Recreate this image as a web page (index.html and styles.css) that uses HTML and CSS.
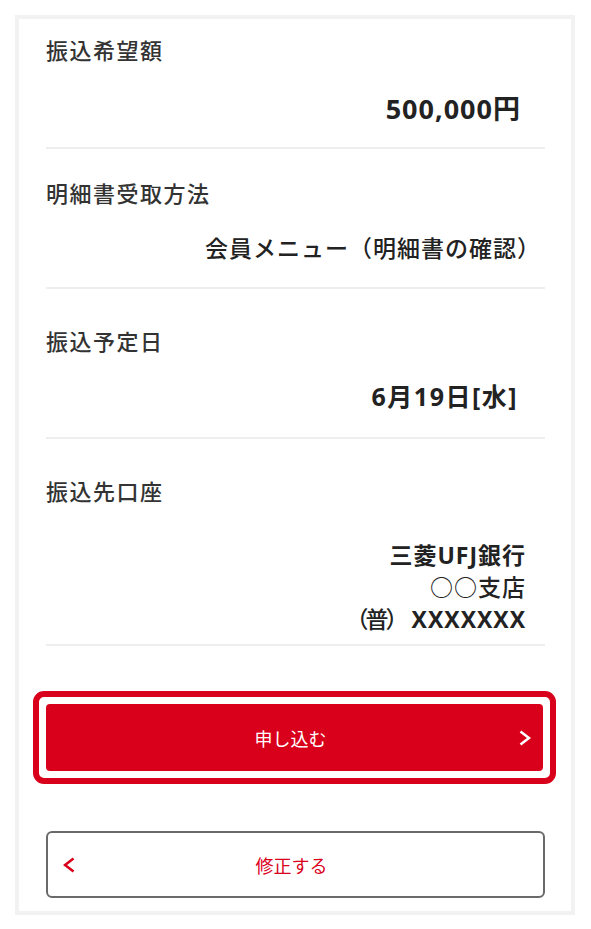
FILE: index.html
```html
<!DOCTYPE html>
<html lang="ja">
<head>
    <meta charset="UTF-8">
    <meta name="viewport" content="width=device-width, initial-scale=1.0">
    <title>振込内容の確認</title>
    <link rel="stylesheet" href="styles.css">
</head>
<body>
    <div class="card">
        <div class="row row--amount">
            <div class="label">振込希望額</div>
            <div class="value value--amount">500,000円</div>
        </div>
        <div class="row row--method">
            <div class="label">明細書受取方法</div>
            <div class="value value--method">会員メニュー（明細書の確認）</div>
        </div>
        <div class="row row--date">
            <div class="label">振込予定日</div>
            <div class="value value--date">6月19日[水]</div>
        </div>
        <div class="row row--account">
            <div class="label">振込先口座</div>
            <div class="value value--account">
                <div class="bold">三菱UFJ銀行</div>
                <div>○○支店</div>
                <div><span class="paren">（普）</span><span class="bold">XXXXXXX</span></div>
            </div>
        </div>

        <div class="actions">
            <div class="focus-ring">
                <button type="button" class="btn btn--primary">
                    <span></span>
                    <span class="btn-text">申し込む</span>
                    <svg class="chevron chevron--right" width="12" height="16" viewBox="0 0 12 16">
                        <polyline points="1.5,1.5 10,8 1.5,14.5" fill="none" stroke="currentColor" stroke-width="2.6"/>
                    </svg>
                </button>
            </div>
            <button type="button" class="btn btn--secondary">
                <svg class="chevron chevron--left" width="12" height="16" viewBox="0 0 12 16">
                    <polyline points="10.5,1.5 2,8 10.5,14.5" fill="none" stroke="currentColor" stroke-width="2.6"/>
                </svg>
                <span class="btn-text">修正する</span>
                <span></span>
            </button>
        </div>
    </div>
</body>
</html>
```

FILE: styles.css
```css
* {
    box-sizing: border-box;
}
body {
    margin: 0;
    padding: 15px 16px 14px 15px;
    background-color: #fff;
    color: #333;
    font-family: "Open Sans", "Noto Sans CJK JP", sans-serif;
}
.card {
    border: 4px solid #f2f2f2;
    padding: 0 26px 13px 27px;
}
.row {
    border-bottom: 2px solid #eee;
    padding: 36px 0 23px;
}
.row--amount {
    padding: 15px 0 18px;
}
.row--method {
    padding-top: 28px;
}
.row--account {
    padding-bottom: 9px;
}
.label {
    font-size: 22px;
    font-weight: 500;
    line-height: 32px;
    letter-spacing: 1.5px;
    margin-bottom: 23px;
}
.row--date .label {
    margin-bottom: 21px;
}
.row--account .label {
    margin-bottom: 32px;
}
.value {
    text-align: right;
    color: #222;
    font-weight: 700;
    letter-spacing: 1px;
    padding-right: 24px;
}
.value--amount {
    font-size: 27px;
    line-height: 40px;
}
.value--method {
    font-size: 23px;
    line-height: 32px;
    font-weight: 500;
    padding-right: 4px;
}
.value--date {
    font-size: 25px;
    line-height: 36px;
    letter-spacing: 1.5px;
    padding-right: 27px;
}
.value--account {
    font-size: 23px;
    line-height: 32px;
    font-weight: 500;
    padding-right: 19px;
}
.value--account .paren {
    letter-spacing: -3px;
    margin-right: 6px;
}
.bold {
    font-weight: 700;
}
.actions {
    margin-top: 45px;
}
.focus-ring {
    border: 6px solid #d9001b;
    border-radius: 11px;
    padding: 7px;
    margin: 0 -11px 0 -13px;
}
.btn {
    display: grid;
    grid-template-columns: 1fr auto 1fr;
    align-items: center;
    width: 100%;
    height: 67px;
    font-family: inherit;
    font-size: 18px;
    cursor: pointer;
}
.btn--primary {
    background-color: #d9001b;
    color: #fff;
    border: none;
    border-radius: 4px;
    padding: 0 12px 0 4px;
}
.btn--secondary {
    margin-top: 47px;
    background-color: #fff;
    color: #d9001b;
    border: 2px solid #6a6a6a;
    border-radius: 6px;
    padding: 0 23px 0 15px;
}
.chevron--right {
    justify-self: end;
}
.chevron--left {
    justify-self: start;
}
```
